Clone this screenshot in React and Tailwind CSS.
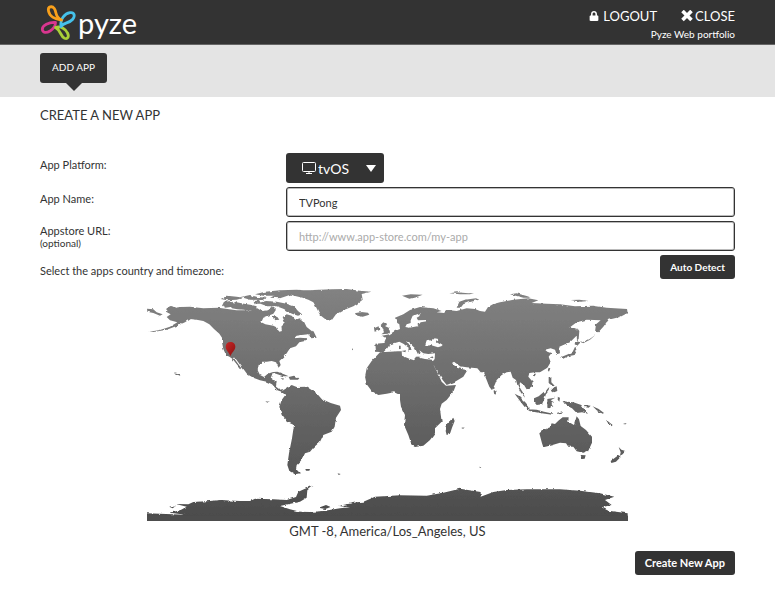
import { useState } from "react";
import { FaLock } from "react-icons/fa";

const LAND = [
  // north america
  "M80 70L95 63L106 68L120 66L150 65L190 70L235 68L262 72L290 76L330 76L352 70L365 78L385 76L395 64L408 74L400 86L385 92L370 98L364 112L376 118L400 122L412 128L418 140L426 138L424 122L434 112L428 96L440 88L455 92L466 104L480 100L492 110L500 126L515 138L520 145L505 148L485 150L470 152L462 160L480 158L500 160L495 168L478 172L468 184L450 190L440 205L432 215L418 228L422 240L416 248L408 232L395 228L380 230L365 230L356 240L353 256L360 270L372 276L386 264L398 264L392 280L398 284L410 288L408 305L420 314L430 312L425 320L412 316L396 298L380 290L360 286L340 278L322 268L312 254L298 236L286 220L280 217L304 250L305 256L292 240L278 222L268 215L258 210L250 192L246 172L246 158L238 146L222 132L208 118L190 108L170 104L150 102L135 112L110 123L80 134L40 141L28 140L60 135L90 125L112 112L90 106L80 96L92 88L78 80Z",
  "M21 71L40 73L50 82L68 88L60 92L40 84L22 80Z",
  // arctic archipelago
  "M246 62L252 50L275 48L282 56L272 66L256 68Z",
  "M270 62L290 52L312 56L335 60L350 64L348 74L318 75L292 73L276 70Z",
  "M242 42L262 32L290 35L310 38L290 44L262 46Z",
  "M302 36L330 30L352 36L378 38L368 45L330 44Z",
  "M345 28L375 20L420 16L470 14L512 17L480 22L455 28L438 34L420 40L390 38L402 32L370 32Z",
  "M355 54L378 48L410 50L440 56L462 64L474 78L486 88L474 92L456 86L444 80L432 72L410 64L382 64Z",
  "M340 48L358 46L362 54L344 58ZM398 92L412 96L418 104L402 106Z",
  // greenland
  "M440 24L480 18L520 15L575 13L620 12L660 17L694 20L665 27L668 44L654 55L640 64L610 76L588 88L574 107L558 104L540 90L528 66L520 52L505 44L488 38L462 32Z",
  "M508 148L522 142L530 158L514 160Z",
  "M648 84L664 81L684 83L688 89L668 95L652 92Z",
  // caribbean
  "M390 262L412 260L432 268L446 274L430 274L408 266ZM446 276L462 272L478 280L474 284L450 284ZM422 279L434 281L428 284Z",
  // south america
  "M424 320L432 314L442 308L455 300L470 306L500 305L510 312L530 325L545 342L572 354L600 362L603 375L588 398L584 425L575 440L550 450L540 470L520 488L510 500L495 505L488 520L480 530L470 540L468 552L480 565L465 568L448 558L442 540L447 505L456 460L462 420L440 410L425 390L418 365L425 345L436 330Z",
  "M496 552L510 552L508 557L498 557Z",
  // europe and asia
  "M765 98L790 88L810 75L840 66L880 70L905 78L890 82L912 84L922 75L950 78L980 70L1005 72L1020 78L1035 80L1044 66L1060 57L1080 52L1120 44L1165 40L1195 46L1175 54L1220 56L1260 58L1305 64L1360 62L1400 68L1461 72L1463 84L1440 96L1405 104L1390 125L1375 142L1365 140L1368 118L1382 106L1340 104L1310 112L1288 128L1310 130L1312 150L1290 172L1275 178L1258 185L1260 205L1250 208L1245 194L1232 190L1215 194L1222 200L1234 205L1226 215L1232 232L1222 248L1200 262L1185 262L1168 264L1165 275L1178 290L1175 305L1160 313L1152 300L1140 292L1138 305L1150 325L1155 338L1142 322L1132 300L1128 285L1118 278L1112 260L1100 262L1085 270L1070 285L1064 300L1056 316L1048 305L1036 275L1030 262L1022 262L1012 250L980 247L960 244L942 230L936 234L950 248L965 252L982 256L970 275L945 290L920 300L908 285L890 255L876 232L884 222L885 205L865 207L850 205L838 196L842 204L834 208L825 190L812 178L798 168L808 182L816 192L804 200L806 188L790 176L778 170L765 174L750 178L742 190L730 202L708 200L706 176L732 174L738 160L726 152L748 148L765 138L780 132L778 118L772 114Z",
  "M724 148L732 142L728 130L722 120L730 112L738 116L736 124L746 128L750 140L744 146ZM702 130L716 124L718 136L704 140Z",
  "M784 198L798 196L796 202ZM777 182L782 182L782 193L777 192ZM826 214L844 216L840 219ZM868 217L882 214L878 220Z",
  "M786 32L812 28L848 29L830 36L808 41Z",
  "M928 25L950 22L985 25L1002 24L990 28L960 28Z",
  "M950 68L958 50L975 44L1008 40L1018 44L990 50L970 58L962 68Z",
  "M1110 28L1130 25L1160 33L1175 38L1150 38ZM1292 45L1318 44L1346 48L1320 50Z",
  // africa
  "M720 202L750 200L785 198L786 212L810 222L822 226L830 216L855 222L876 224L878 235L892 262L905 290L918 302L948 300L940 320L920 345L905 356L900 372L905 410L885 430L885 445L870 465L850 482L825 486L815 480L805 450L792 420L795 390L783 365L780 345L780 330L762 322L740 326L715 330L695 318L680 298L675 275L680 250L695 228Z",
  "M940 398L944 408L936 428L930 446L920 450L917 438L922 414Z",
  // japan, sakhalin, kurils
  "M1312 130L1318 138L1316 162L1311 166L1310 150ZM1306 168L1322 172L1312 182L1304 178ZM1306 184L1310 198L1304 210L1284 214L1268 222L1264 216L1284 208L1298 200Z",
  "M1322 174L1348 163L1366 150L1350 164L1326 176Z",
  "M1226 248L1231 250L1227 260L1223 256ZM1180 266L1188 266L1184 274L1179 272ZM1062 312L1070 318L1066 326L1061 322Z",
  // south east asia
  "M1226 276L1234 276L1234 292L1244 302L1238 304L1226 294ZM1238 308L1250 304L1252 318L1242 322L1232 314ZM1222 312L1228 306L1226 314L1216 328L1214 324Z",
  "M1124 326L1136 332L1156 352L1168 366L1168 374L1154 366L1140 348ZM1166 373L1190 374L1212 380L1240 386L1236 389L1200 384L1168 378Z",
  "M1182 340L1196 334L1212 320L1218 328L1212 344L1206 358L1190 360L1182 350Z",
  "M1222 342L1246 338L1232 346L1242 352L1234 356L1240 366L1230 362L1228 370L1222 368ZM1254 336L1260 338L1258 350L1253 344ZM1250 384L1270 378L1260 388Z",
  "M1268 348L1282 350L1300 352L1324 360L1332 372L1344 386L1326 382L1310 384L1296 370L1276 360ZM1336 360L1352 362L1346 368L1334 366Z",
  "M1358 364L1376 372L1392 384L1388 386L1370 376ZM1398 404L1418 420L1414 424L1402 412Z",
  // oceania
  "M1198 445L1210 435L1230 427L1235 415L1245 417L1255 407L1268 397L1286 397L1285 410L1302 420L1310 394L1317 403L1322 423L1338 435L1356 455L1356 473L1345 497L1330 503L1310 499L1300 485L1285 485L1278 475L1260 473L1235 481L1210 487L1206 475Z",
  "M1322 510L1337 511L1334 521L1326 522Z",
  "M1436 486L1444 494L1456 498L1448 508L1440 512L1442 502ZM1436 510L1442 516L1428 530L1414 534L1412 528Z",
  // antarctica
  "M21 685L136 689L90 683L122 675L140 665L108 657L145 658L160 651L210 648L240 645L300 648L330 648L345 641L400 643L440 645L468 636L475 620L512 604L520 601L502 616L500 638L480 650L420 663L450 673L480 680L510 681L550 678L600 670L630 667L594 663L650 652L670 650L705 635L780 631L860 632L910 623L960 611L1022 621L1022 635L1060 621L1100 615L1160 613L1260 613L1320 617L1380 625L1423 635L1395 645L1415 660L1385 667L1405 677L1463 685L1463 715L21 715Z",
  "M84 664L104 665L98 670ZM536 668L558 660L572 666L556 672Z",
  // scattered islands
  "M102 262L112 264L122 268L120 272L108 267ZM376 349L386 350L382 353ZM50 402L56 404ZM592 565L602 567L598 569ZM1018 545L1024 547L1020 549ZM964 430L974 427L970 431ZM634 190L642 193L638 196ZM1450 416L1460 414L1454 420Z",
];

// seas cut back out of the land
const SEAS = [
  "M855 182L860 166L868 164L875 168L884 160L895 162L890 172L908 182L894 187L874 181Z",
  "M812 106L818 92L832 88L842 84L838 94L830 98L834 106L858 105L860 109L842 112L832 124L808 128L796 126L800 118L812 114Z",
];

function PyzeLogo() {
  return (
    <svg width="98" height="38" viewBox="0 0 98 38" role="img" aria-label="pyze">
      <g fill="none" strokeWidth="2.8" strokeLinecap="round" strokeLinejoin="round">
        <path stroke="#d9368f" d="M15.500 18.500C9 18 2 21.500 2.300 25.500C2.600 29 6.500 29 10 27C14 24.500 15.500 22 15.500 18.500" />
        <path stroke="#a9cf38" d="M15.500 23.500C21 21.500 26 25.500 27.500 29C29.500 33 27.500 35.500 24.500 34.300C20.500 32.500 21 26.500 15.500 23.500" />
        <path stroke="#45c1ea" d="M21 22.500C20 14.500 25 9.500 30 8.700C34.500 8 35.500 12 32.500 15.500C29 19.500 23.500 18.500 21 22.500" />
        <path stroke="#f9a01b" d="M21.500 16C14.500 15.500 9.500 12 8.500 7C7.500 2.500 12 1.500 14.300 4.500C17 8.500 14.500 13 21.500 16" />
      </g>
      <text x="38" y="30" fill="#fff" fontSize="29" fontFamily="Lato, sans-serif">pyze</text>
    </svg>
  );
}

function WorldMap() {
  return (
    <svg viewBox="21 12 1443 696" className="w-full block" role="img" aria-label="World map">
      <defs>
        <linearGradient id="land" gradientUnits="userSpaceOnUse" x1="0" y1="12" x2="0" y2="708">
          <stop offset="0" stopColor="#828282" />
          <stop offset="1" stopColor="#4b4b4b" />
        </linearGradient>
        <linearGradient id="pin" x1="0" y1="0" x2="1" y2="1">
          <stop offset="0" stopColor="#c62828" />
          <stop offset="1" stopColor="#8c1010" />
        </linearGradient>
        {/* roughens the coast lines */}
        <filter id="coast" filterUnits="userSpaceOnUse" x="0" y="0" width="1480" height="720">
          <feTurbulence type="fractalNoise" baseFrequency="0.07" numOctaves="2" seed="4" />
          <feDisplacementMap in="SourceGraphic" scale="8" xChannelSelector="R" yChannelSelector="G" />
        </filter>
      </defs>
      <g filter="url(#coast)">
        <path d={LAND.join("")} fill="url(#land)" />
        <path d={SEAS.join("")} fill="#fff" />
      </g>
      <rect x="21" y="692" width="1443" height="16" fill="#4d4d4d" />
      <path
        d="M271 214C268 202 257 196 257 185C257 177 263 171 271 171C280 171 286 177 286 185C286 196 275 202 271 214Z"
        fill="url(#pin)"
      />
    </svg>
  );
}

export default function App() {
  const [platform, setPlatform] = useState("tvOS");
  const [name, setName] = useState("TVPong");
  const [url, setUrl] = useState("");

  return (
    <div className="min-h-screen bg-white font-[Lato,sans-serif] text-[#333]">
      {/* Header */}
      <header className="h-[45px] bg-[#333] border-b border-[#666] px-10 flex justify-between text-white">
        <a href="#" className="pt-1">
          <PyzeLogo />
        </a>
        <div className="pt-2 text-right">
          <nav className="flex justify-end gap-6 text-[13px] leading-4">
            <a href="#" className="flex items-center gap-1">
              <FaLock size={10} />
              LOGOUT
            </a>
            <a href="#" className="flex items-center gap-0.5">
              <svg width="12" height="12" viewBox="0 0 12 12" stroke="currentColor" strokeWidth="3.6">
                <path d="M1.500 1L10.500 10M10.500 1L1.500 10" />
              </svg>
              CLOSE
            </a>
          </nav>
          <p className="mt-0.5 text-[10px] leading-4">Pyze Web portfolio</p>
        </div>
      </header>

      {/* Tab bar */}
      <div className="h-[52px] bg-[#e4e4e4] px-10 pt-2 flex items-start">
        <div className="flex flex-col items-center">
          <button className="h-[30px] px-3 pb-0.5 bg-[#333] text-white text-[10px] rounded-[3px]">ADD APP</button>
          <div className="border-x-8 border-t-8 border-x-transparent border-t-[#333]" />
        </div>
      </div>

      <main className="px-10 pt-2 pb-8">
        <h1 className="text-[13px] leading-5">CREATE A NEW APP</h1>

        <form className="mt-7 text-[11px]" onSubmit={(e) => e.preventDefault()}>
          <div className="grid grid-cols-[246px_1fr] gap-y-1">
            <label htmlFor="platform" className="pt-1 leading-4">App Platform:</label>
            <div className="relative justify-self-start text-white">
              <select
                id="platform"
                value={platform}
                onChange={(e) => setPlatform(e.target.value)}
                className="appearance-none w-[98px] h-[30px] pl-8 bg-[#333] rounded-[3px] text-[14px]"
              >
                <option>tvOS</option>
                <option>iOS</option>
                <option>Android</option>
                <option>Web</option>
              </select>
              <svg
                className="absolute left-4 top-2 pointer-events-none"
                width="14" height="13" viewBox="0 0 14 13" fill="none" stroke="currentColor"
              >
                <rect x="0.5" y="1.5" width="13" height="9" rx="1" />
                <path d="M4 12.5H10M7 10.500V12.500" />
              </svg>
              <div className="absolute right-2 top-3 border-x-5 border-t-7 border-x-transparent border-t-white pointer-events-none" />
            </div>

            <label htmlFor="name" className="pt-1 leading-4">App Name:</label>
            <input
              id="name"
              type="text"
              value={name}
              onChange={(e) => setName(e.target.value)}
              className="h-[30px] px-3 border border-[#333] rounded-[3px] shadow-[inset_0_0_0_1px_#bbb]"
            />

            <label htmlFor="url" className="pt-1 leading-3">
              Appstore URL:
              <span className="block text-[10px]">(optional)</span>
            </label>
            <input
              id="url"
              type="text"
              value={url}
              placeholder="http://www.app-store.com/my-app"
              onChange={(e) => setUrl(e.target.value)}
              className="h-[30px] px-3 border border-[#333] rounded-[3px] shadow-[inset_0_0_0_1px_#bbb] placeholder:text-[#aaa]"
            />
          </div>

          <div className="mt-1 flex justify-between items-start">
            <p className="pt-2 leading-4">Select the apps country and timezone:</p>
            <button type="button" className="h-6 px-2.5 bg-[#333] text-white text-[10px] font-bold rounded-[3px]">
              Auto Detect
            </button>
          </div>

          <div className="mt-2.5 mx-auto max-w-[481px]">
            <WorldMap />
            <p className="text-center text-[13px] leading-5">GMT -8, America/Los_Angeles, US</p>
          </div>

          <div className="mt-2.5 flex justify-end">
            <button type="submit" className="h-6 px-2.5 bg-[#333] text-white text-[11px] font-bold rounded-[3px]">
              Create New App
            </button>
          </div>
        </form>
      </main>
    </div>
  );
}
